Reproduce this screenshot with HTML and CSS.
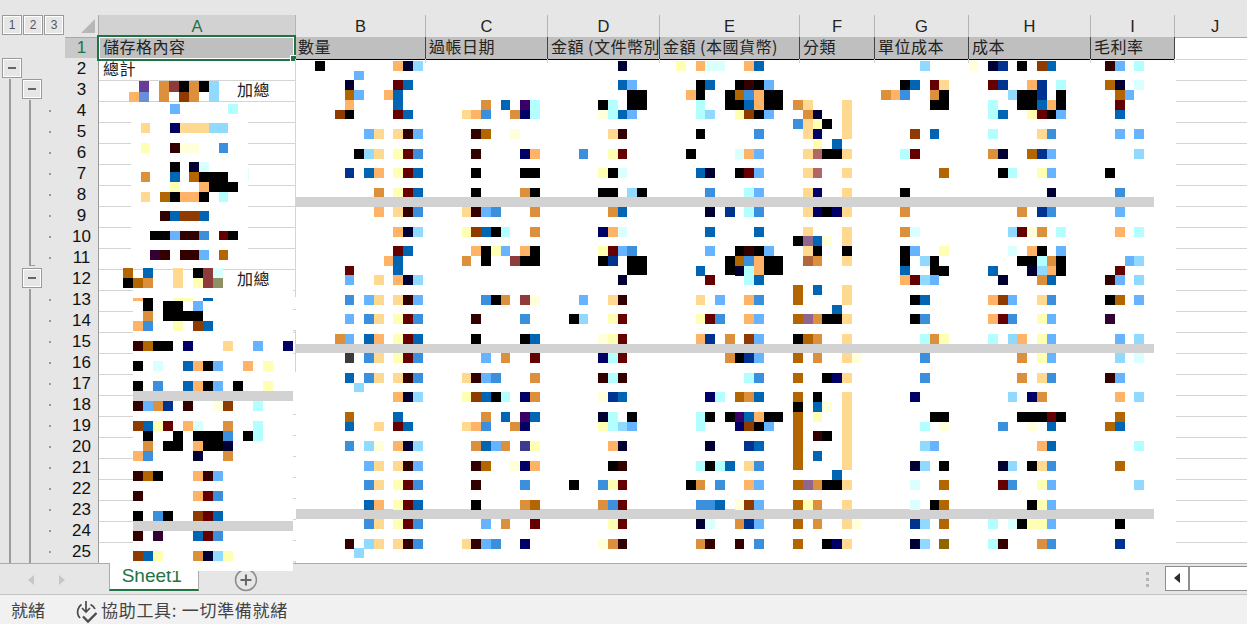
FILE: index.html
```html
<!DOCTYPE html>
<html lang="zh-Hant">
<head>
    <meta charset="UTF-8">
    <title>Sheet1</title>
    <link rel="stylesheet" href="styles.css">
</head>
<body>

<div class="app">
    <div class="top-strip"></div>

    <div class="sheet">
        <!-- column letters -->
        <div class="row head-row">
            <div class="levels">
                <button class="level-btn">1</button>
                <button class="level-btn">2</button>
                <button class="level-btn">3</button>
            </div>
            <div class="corner"><span class="corner-mark"></span></div>
            <div class="col-head active">A</div>
            <div class="col-head">B</div>
            <div class="col-head">C</div>
            <div class="col-head">D</div>
            <div class="col-head">E</div>
            <div class="col-head">F</div>
            <div class="col-head">G</div>
            <div class="col-head">H</div>
            <div class="col-head">I</div>
            <div class="col-head last">J</div>
        </div>

        <!-- header row of the table -->
        <div class="row">
            <span class="ol"></span><span class="ol"></span><span class="ol"></span>
            <div class="row-head active">1</div>
            <div class="title-cell selected">儲存格內容<span class="selection"><span class="handle"></span></span></div>
            <div class="title-cell first-value">數量</div>
            <div class="title-cell">過帳日期</div>
            <div class="title-cell">金額 (文件幣別)</div>
            <div class="title-cell">金額 (本國貨幣)</div>
            <div class="title-cell">分類</div>
            <div class="title-cell">單位成本</div>
            <div class="title-cell">成本</div>
            <div class="title-cell">毛利率</div>
            <div class="cell-j"></div>
        </div>

        <div class="row">
            <span class="ol"><button class="fold-btn top-level"></button></span><span class="ol"></span><span class="ol"></span>
            <div class="row-head">2</div><div class="cell-a">總計</div><div class="values"></div><div class="cell-j"></div>
        </div>
        <div class="row">
            <span class="ol line"></span><span class="ol"><button class="fold-btn"></button></span><span class="ol"></span>
            <div class="row-head">3</div><div class="cell-a subtotal">加總</div><div class="values"></div><div class="cell-j"></div>
        </div>
        <div class="row">
            <span class="ol line"></span><span class="ol line"></span><span class="ol dot"></span>
            <div class="row-head">4</div><div class="cell-a"></div><div class="values"></div><div class="cell-j"></div>
        </div>
        <div class="row">
            <span class="ol line"></span><span class="ol line"></span><span class="ol dot"></span>
            <div class="row-head">5</div><div class="cell-a"></div><div class="values"></div><div class="cell-j"></div>
        </div>
        <div class="row">
            <span class="ol line"></span><span class="ol line"></span><span class="ol dot"></span>
            <div class="row-head">6</div><div class="cell-a"></div><div class="values"></div><div class="cell-j"></div>
        </div>
        <div class="row">
            <span class="ol line"></span><span class="ol line"></span><span class="ol dot"></span>
            <div class="row-head">7</div><div class="cell-a"></div><div class="values"></div><div class="cell-j"></div>
        </div>
        <div class="row">
            <span class="ol line"></span><span class="ol line"></span><span class="ol dot"></span>
            <div class="row-head">8</div><div class="cell-a"></div><div class="values"></div><div class="cell-j"></div>
        </div>
        <div class="row">
            <span class="ol line"></span><span class="ol line"></span><span class="ol dot"></span>
            <div class="row-head">9</div><div class="cell-a"></div><div class="values"></div><div class="cell-j"></div>
        </div>
        <div class="row">
            <span class="ol line"></span><span class="ol line"></span><span class="ol dot"></span>
            <div class="row-head">10</div><div class="cell-a"></div><div class="values"></div><div class="cell-j"></div>
        </div>
        <div class="row">
            <span class="ol line"></span><span class="ol line-end"></span><span class="ol dot"></span>
            <div class="row-head">11</div><div class="cell-a"></div><div class="values"></div><div class="cell-j"></div>
        </div>
        <div class="row">
            <span class="ol line"></span><span class="ol"><button class="fold-btn"></button></span><span class="ol"></span>
            <div class="row-head">12</div><div class="cell-a subtotal">加總</div><div class="values"></div><div class="cell-j"></div>
        </div>
        <div class="row">
            <span class="ol line"></span><span class="ol line"></span><span class="ol dot"></span>
            <div class="row-head">13</div><div class="cell-a"></div><div class="values"></div><div class="cell-j"></div>
        </div>
        <div class="row">
            <span class="ol line"></span><span class="ol line"></span><span class="ol dot"></span>
            <div class="row-head">14</div><div class="cell-a"></div><div class="values"></div><div class="cell-j"></div>
        </div>
        <div class="row">
            <span class="ol line"></span><span class="ol line"></span><span class="ol dot"></span>
            <div class="row-head">15</div><div class="cell-a"></div><div class="values"></div><div class="cell-j"></div>
        </div>
        <div class="row">
            <span class="ol line"></span><span class="ol line"></span><span class="ol dot"></span>
            <div class="row-head">16</div><div class="cell-a"></div><div class="values"></div><div class="cell-j"></div>
        </div>
        <div class="row">
            <span class="ol line"></span><span class="ol line"></span><span class="ol dot"></span>
            <div class="row-head">17</div><div class="cell-a"></div><div class="values"></div><div class="cell-j"></div>
        </div>
        <div class="row">
            <span class="ol line"></span><span class="ol line"></span><span class="ol dot"></span>
            <div class="row-head">18</div><div class="cell-a"></div><div class="values"></div><div class="cell-j"></div>
        </div>
        <div class="row">
            <span class="ol line"></span><span class="ol line"></span><span class="ol dot"></span>
            <div class="row-head">19</div><div class="cell-a"></div><div class="values"></div><div class="cell-j"></div>
        </div>
        <div class="row">
            <span class="ol line"></span><span class="ol line"></span><span class="ol dot"></span>
            <div class="row-head">20</div><div class="cell-a"></div><div class="values"></div><div class="cell-j"></div>
        </div>
        <div class="row">
            <span class="ol line"></span><span class="ol line"></span><span class="ol dot"></span>
            <div class="row-head">21</div><div class="cell-a"></div><div class="values"></div><div class="cell-j"></div>
        </div>
        <div class="row">
            <span class="ol line"></span><span class="ol line"></span><span class="ol dot"></span>
            <div class="row-head">22</div><div class="cell-a"></div><div class="values"></div><div class="cell-j"></div>
        </div>
        <div class="row">
            <span class="ol line"></span><span class="ol line"></span><span class="ol dot"></span>
            <div class="row-head">23</div><div class="cell-a"></div><div class="values"></div><div class="cell-j"></div>
        </div>
        <div class="row">
            <span class="ol line"></span><span class="ol line"></span><span class="ol dot"></span>
            <div class="row-head">24</div><div class="cell-a"></div><div class="values"></div><div class="cell-j"></div>
        </div>
        <div class="row">
            <span class="ol line"></span><span class="ol line"></span><span class="ol dot"></span>
            <div class="row-head">25</div><div class="cell-a"></div><div class="values"></div><div class="cell-j"></div>
        </div>
    </div>

    <div class="tab-bar">
        <div class="tab-nav">
            <span class="nav-left"></span>
            <span class="nav-right"></span>
        </div>
        <div class="tab">Sheet1</div>
        <svg class="add-sheet" width="24" height="24" viewBox="0 0 24 24">
            <circle cx="12" cy="12" r="10.5" fill="none" stroke="#8c8c8c" stroke-width="1.5"/>
            <path d="M12 6.5v11M6.5 12h11" stroke="#666" stroke-width="2"/>
        </svg>
        <div class="tab-dots"><i></i><i></i><i></i></div>
        <div class="h-scroll">
            <span class="scroll-left"><span class="scroll-arrow"></span></span>
            <span class="scroll-track"></span>
        </div>
    </div>

    <div class="status-bar">
        <span class="status-ready">就緒</span>
        <svg class="a11y-icon" width="24" height="24" viewBox="0 0 24 24" fill="none" stroke="#4a4a4a" stroke-width="1.7">
            <path d="M6.5 4.5A9 9 0 0 0 3.5 16l1.5 2"/>
            <path d="M15.5 4.5A9 9 0 0 1 20 9"/>
            <path d="M11 1v10.5M7 8l4 4 4-4"/>
            <path d="M8 16.5l5 5 8.5-8.5" stroke-width="2.3"/>
        </svg>
        <span class="status-check">協助工具: 一切準備就緒</span>
    </div>

    <!-- blurred blocks over the confidential values -->
    <svg id="mosaic" class="mosaic" width="1247" height="624" viewBox="0 0 1247 624"></svg>
</div>

<script src="mosaic.js"></script>
</body>
</html>
```

FILE: styles.css
```css
/* Reset */
* {
    margin: 0;
    padding: 0;
    box-sizing: border-box;
}

body {
    background: #fff;
    font-family: "Liberation Sans", "Noto Sans CJK TC", sans-serif;
    overflow: hidden;
}

.app {
    position: relative;
    width: 1247px;
    height: 624px;
    overflow: hidden;
    background: #e6e6e6;
}

.top-strip {
    height: 15px;
}

/* Sheet grid */
.sheet {
    height: 548px;
    background: #fff;
    overflow: hidden;
}

.row {
    display: grid;
    grid-template-columns: 22px 20px 23px 34px 197px 130px 122px 112px 140px 75px 94px 122px 84px 80px;
    height: 21px;
}

.head-row {
    height: 22px;
}

.levels {
    grid-column: span 3;
    display: flex;
    gap: 1px;
    padding-left: 2px;
    background: #e6e6e6;
}

.level-btn {
    width: 20px;
    height: 20px;
    border: 1px solid #9a9a9a;
    box-shadow: inset 0 0 0 1px #fff;
    background: #e6e6e6;
    font: 12px "Liberation Sans", sans-serif;
    color: #555;
}

.corner {
    background: #e6e6e6;
    border-bottom: 1px solid #a8a8a8;
    border-right: 1px solid #a8a8a8;
    position: relative;
}

.corner-mark {
    position: absolute;
    left: 16px;
    top: 4px;
    border-style: solid;
    border-width: 0 0 14px 14px;
    border-color: transparent transparent #b7b7b7 transparent;
}

.col-head {
    background: #e6e6e6;
    border-bottom: 1px solid #a8a8a8;
    border-right: 1px solid #b4b4b4;
    text-align: center;
    font-size: 16.5px;
    line-height: 22px;
    color: #222;
}

.col-head.active {
    background: #d2d2d2;
    color: #217346;
}

.col-head.last {
    border-right: none;
}

/* Outline gutter */
.ol {
    display: block;
    background: #e6e6e6;
}

.line::before,
.line-end::before {
    content: "";
    display: block;
    width: 2px;
    height: 100%;
    margin-left: 9px;
    background: #9c9c9c;
}

.row .ol:nth-child(2).line::before {
    margin-left: 7px;
}

.line-end {
    position: relative;
}

.line-end::before {
    margin-left: 7px;
    height: 19px;
}

.line-end::after {
    content: "";
    position: absolute;
    left: 7px;
    top: 18px;
    width: 6px;
    height: 1px;
    background: #9c9c9c;
}

.dot::before {
    content: "";
    display: block;
    width: 2px;
    height: 2px;
    margin: 10px 0 0 7px;
    background: #999;
}

.fold-btn {
    display: block;
    width: 20px;
    height: 20px;
    border: 1px solid #9a9a9a;
    box-shadow: inset 0 0 0 1px #fff;
    background: #e6e6e6;
    position: relative;
}

.fold-btn.top-level {
    margin-left: 2px;
}

.fold-btn::after {
    content: "";
    position: absolute;
    left: 5px;
    top: 8px;
    width: 8px;
    height: 2px;
    background: #666;
}

.row-head {
    background: #e6e6e6;
    border-bottom: 1px solid #b0b0b0;
    border-right: 1px solid #9a9a9a;
    text-align: center;
    font-size: 17px;
    line-height: 22px;
    color: #111;
}

.row-head.active {
    background: #c9c9c9;
    color: #217346;
}

/* Cells */
.title-cell {
    position: relative;
    background: #bfbfbf;
    border-bottom: 1px solid #000;
    border-right: 1px solid #444;
    padding-left: 3px;
    font-family: "Noto Sans CJK TC", sans-serif;
    font-size: 16px;
    letter-spacing: 0.5px;
    line-height: 19px;
    color: #222;
    white-space: nowrap;
    clip-path: inset(0 0 -4px 0);
}

.title-cell::after {
    content: "";
    position: absolute;
    right: -1px;
    top: 100%;
    width: 1px;
    height: 4px;
    background: #d4d4d4;
}

.title-cell.selected {
    padding-left: 4px;
    clip-path: none;
}

.title-cell.first-value {
    padding-left: 2px;
}

.selection {
    position: absolute;
    left: -2px;
    top: -2px;
    right: -1px;
    bottom: -2px;
    border: 2px solid #217346;
    box-shadow: inset 0 0 0 1px #fff;
}

.handle {
    position: absolute;
    right: -3px;
    bottom: -3px;
    width: 7px;
    height: 7px;
    background: #217346;
    border: 1px solid #fff;
}

.cell-a {
    border-bottom: 1px solid #d4d4d4;
    border-right: 1px solid #d4d4d4;
    padding-left: 4px;
    font-family: "Noto Sans CJK TC", sans-serif;
    font-size: 16px;
    letter-spacing: 0.5px;
    line-height: 21px;
    color: #222;
}

.cell-a.subtotal {
    padding-left: 138px;
}

.values {
    grid-column: span 8;
    background: #fff;
}

.cell-j {
    border-bottom: 1px solid #d4d4d4;
    margin-left: 1px;
}

/* Sheet tabs */
.tab-bar {
    display: flex;
    align-items: flex-start;
    height: 31px;
    border-top: 1px solid #ababab;
    background: #e6e6e6;
}

.tab-nav {
    display: flex;
    gap: 25px;
    width: 109px;
    padding: 11px 0 0 28px;
}

.nav-left,
.nav-right {
    border-style: solid;
    border-color: transparent;
    border-width: 5px 0;
}

.nav-left {
    border-right: 6px solid #c6c6c6;
}

.nav-right {
    border-left: 6px solid #c6c6c6;
}

.tab {
    width: 91px;
    height: 28px;
    margin-top: -1px;
    background: #fff;
    border: 1px solid #ababab;
    border-top: none;
    border-bottom: 2px solid #217346;
    padding-left: 12px;
    font-size: 19px;
    line-height: 26px;
    color: #217346;
}

.add-sheet {
    margin: 4px 0 0 35px;
}

.tab-dots {
    display: flex;
    flex-direction: column;
    gap: 3px;
    margin: 8px 0 0 888px;
}

.tab-dots i {
    display: block;
    width: 3px;
    height: 3px;
    background: #b4b4b4;
}

.h-scroll {
    display: flex;
    width: 82px;
    height: 25px;
    margin: 2px 0 0 16px;
    border: 1px solid #8e8e8e;
    border-right: none;
    background: #fff;
}

.scroll-left {
    width: 24px;
    border-right: 2px solid #8e8e8e;
    padding: 6px 0 0 8px;
}

.scroll-arrow {
    display: block;
    width: 0;
    border-style: solid;
    border-color: transparent #2c2c2c transparent transparent;
    border-width: 5px 6px 5px 0;
}

/* Status bar */
.status-bar {
    display: flex;
    align-items: center;
    height: 30px;
    border-top: 1px solid #c4c4c4;
    background: #f1f1f1;
    padding-left: 11px;
    font-family: "Noto Sans CJK TC", sans-serif;
    font-size: 17px;
    color: #444;
}

.a11y-icon {
    margin: 4px 2px 0 30px;
    flex: none;
}

.status-check {
    letter-spacing: 0.7px;
}

/* Mosaic overlay */
.mosaic {
    position: absolute;
    left: 0;
    top: 0;
    pointer-events: none;
}

.m-wh { fill: #fff; }
.m-bd { fill: #d2d2d2; }
.m-gl { fill: #d4d4d4; }
.m-k { fill: #000; }
.m-v { fill: #330000; }
.m-d { fill: #000033; }
.m-n { fill: #000066; }
.m-a { fill: #003390; }
.m-b { fill: #0066b3; }
.m-c { fill: #3b90dd; }
.m-l { fill: #66b3ff; }
.m-p { fill: #90d9ff; }
.m-y { fill: #b3ffff; }
.m-z { fill: #d9ffff; }
.m-w { fill: #ffffb3; }
.m-e { fill: #ffffd9; }
.m-t { fill: #ffd98f; }
.m-o { fill: #ffb366; }
.m-g { fill: #dd903b; }
.m-h { fill: #b36600; }
.m-r { fill: #8f3b00; }
.m-m { fill: #660000; }
.m-u { fill: #3b0066; }
.m-q { fill: #330033; }
.m-x { fill: #8f3b3b; }
.m-i { fill: #b36666; }
.m-j { fill: #906690; }
.m-f { fill: #663d99; }
.m-s { fill: #6690dd; }
.m-dg { fill: #3b3b3b; }
.m-in { fill: #3b3b90; }
.m-ol { fill: #909066; }
.m-br { fill: #b3663b; }
.m-dy { fill: #8f6600; }
```

FILE: mosaic.js
```js
// Each entry: [top, height, "colour + x-from - x-to ..."]
const blocks = [
    // white patches that hide the grid lines
    [98, 3, "wh119-229"], [102, 148, "wh131-248"], [286, 4, "wh113-223"], [290, 281, "wh133-293"],
    [297, 34, "wh293-296"], [372, 190, "wh293-296"],
    [309, 1, "gl293-296"], [330, 1, "gl293-296"], [414, 1, "gl293-296"], [435, 1, "gl293-296"],
    [456, 1, "gl293-296"], [477, 1, "gl293-296"], [498, 1, "gl293-296"], [519, 1, "gl293-296"],
    [540, 1, "gl293-296"], [561, 1, "gl293-296"],

    // grey bands
    [197, 10, "bd296-1154"], [344, 9, "bd296-1154"], [509, 10, "bd296-1154"],
    [391, 10, "bd133-293"], [521, 10, "bd133-293"],

    // column A
    [81, 11, "f139-149 g159-169 x169-179 k179-189 g189-199 k199-209 p209-219"],
    [92, 10, "o129-139 s139-149 g159-169 r179-189 g189-199 p209-219"],
    [104, 10, "l170-180 y228-238"],
    [123, 10, "t141-150 n170-180 t180-209 p209-228"],
    [143, 10, "w141-150 v170-180 e180-199 c219-228"],
    [162, 10, "k170-180 d189-199 z199-209"],
    [168, 12, "z248-249"],
    [172, 10, "g141-150 b170-180 h189-199 k199-228"],
    [182, 10, "w170-180 o199-209 k209-238"],
    [192, 10, "t141-150 h160-170 k170-180 o180-199 k199-209 y219-228"],
    [211, 10, "v160-170 b170-180 r180-199 b199-209"],
    [231, 9, "k150-170 l170-180 v180-199 c199-209 m219-228 k228-238"],
    [250, 10, "q150-160 v160-170 v180-199 l199-209 h219-228"],
    [268, 10, "h123-133 b143-153 t173-183 k193-203 x203-213 z213-223"],
    [278, 10, "k123-133 h133-143 g143-153 t173-183 w193-203 x203-213 ol213-223"],
    [298, 3, "o133-143 w173-193 b203-213"],
    [298, 13, "k143-153"],
    [301, 20, "k163-183"],
    [301, 10, "l193-203"],
    [311, 10, "g143-153 k183-203"],
    [321, 10, "o133-143 c143-153 w173-183 r193-203 b203-213"],
    [341, 10, "v133-143 h143-153 k153-173 n183-193 t223-233 l253-263 n283-293"],
    [361, 10, "k133-143 z153-163 b183-193 o193-203 k203-213 l213-223 o243-253 w263-273"],
    [381, 10, "k133-143 c153-163 b183-193 o193-203 k203-213 l213-223 k233-243 w263-273"],
    [401, 10, "v133-143 l143-153 g153-163 a163-173 v183-193 e213-223 r223-233 y253-263"],
    [421, 10, "r133-143 b143-153 w153-163 m163-173 o183-193 z193-203 g223-233"],
    [421, 20, "y253-263"],
    [431, 10, "k143-153 k173-183 k193-223 c223-233 k243-253"],
    [441, 10, "g143-153 k163-183 o193-203 k203-223 d223-233"],
    [451, 10, "o133-143 c143-153 d193-203 g223-233"],
    [471, 10, "v133-143 h143-153 k153-163 o193-203 v203-213 l213-223"],
    [491, 10, "v133-143 o193-203 m203-213 c213-223"],
    [511, 10, "k133-143 c153-163 k163-173 r193-203 m203-213 b213-223"],
    [531, 10, "v133-143 q153-163 b193-203 m203-213 c213-223"],
    [551, 10, "r133-143 b143-153 w153-163 g193-203 d203-213 p213-223 w223-233"],

    // columns B to I
    [61, 10, "k315-325 o393-403 d403-413 p413-423 d618-627 w676-686 o696-705 z705-725 o744-754 b754-764 p920-930 e969-978 d988-998 a998-1008 k1017-1027 r1037-1047 b1047-1056 v1105-1115 l1115-1125 y1134-1144"],
    [71, 9, "l354-364"],
    [80, 10, "d345-354 m393-403 b403-413 b618-627 l627-637 k696-705 b705-715 k735-744 v744-754 k754-764 l764-774 k900-910 b910-920 m930-939 t939-949 m988-998 a998-1008 o1027-1037 y1056-1066 h1105-1115 d1115-1125 z1134-1144"],
    [80, 20, "a1037-1047"],
    [90, 10, "h345-354 l354-364 o384-394 k696-705 o686-696 h735-744 c744-754 g881-891 o891-900 c900-910 g930-939 k939-949 p1008-1017 h1115-1125 l1125-1134"],
    [90, 20, "b393-403 k627-647 k725-735 o754-764 k764-783 k1017-1037 k1056-1066"],
    [100, 10, "o345-354 g481-491 b501-510 u520-530 k598-608 k735-744 b744-754 g793-803 t803-813 k930-949 b1037-1047 o1047-1056 m1115-1125"],
    [100, 19, "y530-540 y608-618 y696-705 y988-998"],
    [100, 39, "t842-852"],
    [110, 9, "r335-345 k345-354 m393-403 b403-413 t462-471 o471-481 c481-491 g510-520 n520-530 e598-608 b618-627 l627-637 p705-715 w735-744 r744-754 k754-764 l764-774 g803-813 d813-822 b998-1008 w1027-1037 m1037-1047 k1047-1056 l1056-1066 b1115-1125"],
    [119, 10, "c793-803 t803-813 w813-822 k822-832"],
    [129, 10, "l364-374 t374-384 t393-403 v403-413 l413-423 v471-481 h481-491 e510-520 t608-618 v618-627 k696-705 c754-764 t803-813 n813-822 r910-920 b930-939 y988-998 t1037-1047 c1047-1056 l1115-1125 l1134-1144"],
    [139, 10, "w813-822 b832-842"],
    [149, 10, "k354-364 p364-374 t374-384 w393-403 m403-413 c413-423 v471-481 n520-530 o530-540 c579-588 w608-618 m618-627 k686-696 z735-744 o744-754 l754-764 t803-813 i813-822 k822-842 t842-852 y900-910 m910-920 g988-998 d998-1008 h1027-1037 a1037-1047 l1047-1056 p1134-1144"],
    [168, 10, "a345-354 b364-374 o374-384 w393-403 m403-413 b413-423 k471-481 k520-540 w598-608 k608-618 z618-627 b696-705 d705-715 k735-744 m744-754 l754-764 t803-813 i813-822 t842-852 h939-949 k998-1008 y1008-1017 w1037-1047 l1047-1056 k1105-1115"],
    [188, 9, "g374-384 w393-403 m403-413 b413-423 k471-481 g520-530 k530-540 k598-618 p627-637 k637-647 c705-715 y744-754 l754-764 t803-813 n813-822 t842-852 k900-910 d1047-1056 c1115-1125"],
    [207, 10, "o374-384 t393-403 v403-413 c413-423 t462-471 v471-481 l481-491 c491-501 g530-540 g608-618 b618-627 d705-715 a725-735 y744-754 c754-764 t803-813 n813-822 k822-832 n832-842 t842-852 g900-910 g1017-1027 a1037-1047 c1047-1056 l1115-1125"],
    [227, 10, "o393-403 d403-413 p413-423 w462-471 r471-481 b481-491 k491-501 y501-510 g530-540 n598-608 o608-618 z618-627 b705-715 b754-764 t803-813 g900-910 z910-920 p1008-1017 m1017-1027 e1027-1037 g1037-1047 y1056-1066 o1115-1125 y1134-1144"],
    [227, 19, "t842-852"],
    [236, 10, "k793-803 j803-813 b813-822 e822-832"],
    [246, 10, "m393-403 b403-413 o471-481 k481-491 w491-501 l501-510 o520-530 k530-540 w598-608 m608-618 l618-627 c627-637 l705-715 k735-744 v744-754 k754-764 l764-774 t803-813 k813-822 k842-852 l910-920 w939-949 z1008-1017 o1027-1037 k1037-1047 l1056-1066"],
    [246, 20, "k900-910"],
    [256, 10, "o384-394 g462-471 k481-491 x510-520 k520-540 k598-608 a608-618 h735-744 c744-754 br803-813 g813-822 t842-852 p920-930 k930-939 k1017-1037 y1037-1047 g1047-1056 k1056-1066 l1125-1134 p1134-1144"],
    [256, 19, "k627-647 k725-735 o754-764 k764-783"],
    [256, 20, "b393-403"],
    [266, 10, "m345-354 b696-705 d735-744 b900-910 k930-949 b988-998 d1027-1037 p1037-1047 o1047-1056 k1056-1066 m1115-1125"],
    [266, 19, "y744-754"],
    [275, 10, "l345-354 t374-384 o393-403 d403-413 p413-423 d618-627 m705-715 b754-764 o900-910 m910-920 p920-930 l930-939 d998-1008 g1037-1047 b1047-1056 v1105-1115 l1115-1125 p1134-1144"],
    [285, 20, "h793-803 t842-852"],
    [285, 10, "b813-822"],
    [295, 10, "c345-354 l364-374 t374-384 t393-403 v403-413 l413-423 c481-491 k491-501 g501-510 x520-530 e530-540 l579-588 t608-618 v618-627 t696-705 l715-725 o744-754 c754-764 k910-920 b920-930 o988-998 r998-1008 l1008-1017 t1037-1047 c1047-1056 k1105-1115 h1115-1125 l1134-1144"],
    [305, 9, "b832-842"],
    [314, 10, "l345-354 c364-374 t374-384 w393-403 m403-413 c413-423 v471-481 c520-530 k569-579 p579-588 w608-618 m618-627 w696-705 m705-715 c715-725 o744-754 l754-764 h793-803 j803-813 g813-822 k822-842 t842-852 k910-920 c920-930 o988-998 m998-1008 c1008-1017 w1037-1047 l1047-1056 q1105-1115"],
    [334, 10, "g335-345 l345-354 b364-374 o374-384 w393-403 m403-413 b413-423 k471-481 k520-530 b530-540 e598-608 w608-618 m618-627 o696-705 a705-715 g725-735 r744-754 l754-764 k793-803 h803-813 g813-822 t842-852 y920-930 g930-939 w939-949 y988-998 p1008-1017 o1017-1027 w1037-1047 l1047-1056 l1115-1125 p1134-1144"],
    [353, 10, "dg345-354 c364-374 t374-384 w393-403 m403-413 c413-423 l481-491 g501-510 m530-540 n598-608 y608-618 m618-627 g725-735 k735-744 a744-754 l754-764 h793-803 g813-822 t842-852 e852-861 c920-930 g1017-1027 w1037-1047 l1047-1056 p1115-1125 z1134-1144"],
    [373, 10, "b345-354 c364-374 t374-384 t393-403 v403-413 c413-423 t462-471 v471-481 l481-491 c491-501 g530-540 v598-608 y608-618 v618-627 y744-754 c754-764 h793-803 k822-832 n832-842 t842-852 c920-930 g1017-1027 t1037-1047 c1047-1056 v1105-1115 l1115-1125"],
    [383, 9, "p354-364"],
    [392, 10, "o393-403 d403-413 p413-423 w462-471 r471-481 b481-491 k491-501 y501-510 n520-530 g530-540 e598-608 a608-618 b618-627 n705-715 y715-725 h735-744 g744-754 b754-764 h793-803 k813-822 n910-920 p1008-1017 n1027-1037 g1037-1047 o1115-1125 p1134-1144"],
    [392, 78, "t842-852"],
    [402, 10, "k793-803 b813-822 e822-832"],
    [412, 58, "h793-803"],
    [412, 10, "h345-354 b393-403 g481-491 b501-510 u520-530 b530-540 d598-608 k627-637 k705-715 k725-735 u735-744 b744-754 o754-764 k764-783 w813-822 k930-949 k1017-1047 m1047-1056 k1056-1066 h1115-1125"],
    [412, 19, "y608-618 y696-705"],
    [422, 9, "b345-354 t374-384 m393-403 b403-413 t462-471 o471-481 c481-491 g510-520 n520-530 w598-608 p618-627 l627-637 n735-744 r744-754 k754-764 l764-774 y920-930 e939-949 c998-1008 e1027-1037 b1047-1056 h1105-1115 b1115-1125"],
    [431, 10, "v813-822 k822-832"],
    [441, 10, "c345-354 p364-374 e374-384 o393-403 d403-413 p413-423 g471-481 b481-491 l491-501 g501-510 in520-530 w530-540 o608-618 d618-627 d705-715 a744-754 b754-764 p920-930 l930-939 o1037-1047 b1047-1056 y1134-1144"],
    [451, 10, "b813-822"],
    [461, 10, "l364-374 t374-384 t393-403 v403-413 l413-423 v471-481 h481-491 e510-520 n520-530 o530-540 k608-618 v618-627 y696-705 k705-715 y715-725 b725-735 t744-754 c754-764 d910-920 p920-930 k939-949 d998-1008 p1008-1017 k1027-1037 t1037-1047 c1047-1056 h1115-1125"],
    [470, 10, "b832-842"],
    [480, 10, "c364-374 t374-384 w393-403 m403-413 c413-423 v471-481 c520-530 k569-579 c598-608 w608-618 m618-627 k686-696 g696-705 c715-725 o744-754 l754-764 h793-803 j803-813 g813-822 k822-842 t842-852 z910-920 h939-949 m998-1008 c1008-1017 w1037-1047 l1047-1056 p1134-1144"],
    [500, 10, "b364-374 o374-384 w393-403 m403-413 b413-423 k471-481 g520-530 h530-540 g598-608 c608-618 m618-627 c696-715 b715-725 e735-744 r744-754 l754-764 h793-803 w803-813 g813-822 t842-852 z910-920 k930-939 h939-949 k1027-1037 w1037-1047 l1047-1056"],
    [519, 10, "c364-374 t374-384 w393-403 m403-413 c413-423 l481-491 g501-510 m530-540 w608-618 m618-627 d696-705 z705-715 g735-744 a744-754 l754-764 h793-803 g813-822 t842-852 e852-861 a910-920 p920-930 h939-949 y988-998 z1008-1017 k1017-1027 w1027-1047 l1047-1056 k1115-1125"],
    [539, 10, "v345-354 p364-374 t374-384 t393-403 v403-413 c413-423 t462-471 v471-481 l481-491 c491-501 n520-530 e598-608 g608-618 v618-627 g696-705 v705-715 v735-744 c754-764 h793-803 k822-832 n832-842 t842-852 d910-920 p920-930 dy939-949 y988-998 v998-1008 g1037-1047 c1047-1056 a1115-1125"],
    [548, 10, "p354-364"]
];

const mosaic = document.getElementById('mosaic');

blocks.forEach(([top, height, cells]) => {
    cells.split(' ').forEach(cell => {
        const [, colour, from, to] = cell.match(/([a-z]+)(\d+)-(\d+)/);
        const rect = document.createElementNS('http://www.w3.org/2000/svg', 'rect');
        rect.setAttribute('class', `m-${colour}`);
        rect.setAttribute('x', from);
        rect.setAttribute('y', top);
        rect.setAttribute('width', to - from);
        rect.setAttribute('height', height);
        mosaic.appendChild(rect);
    });
});
```
